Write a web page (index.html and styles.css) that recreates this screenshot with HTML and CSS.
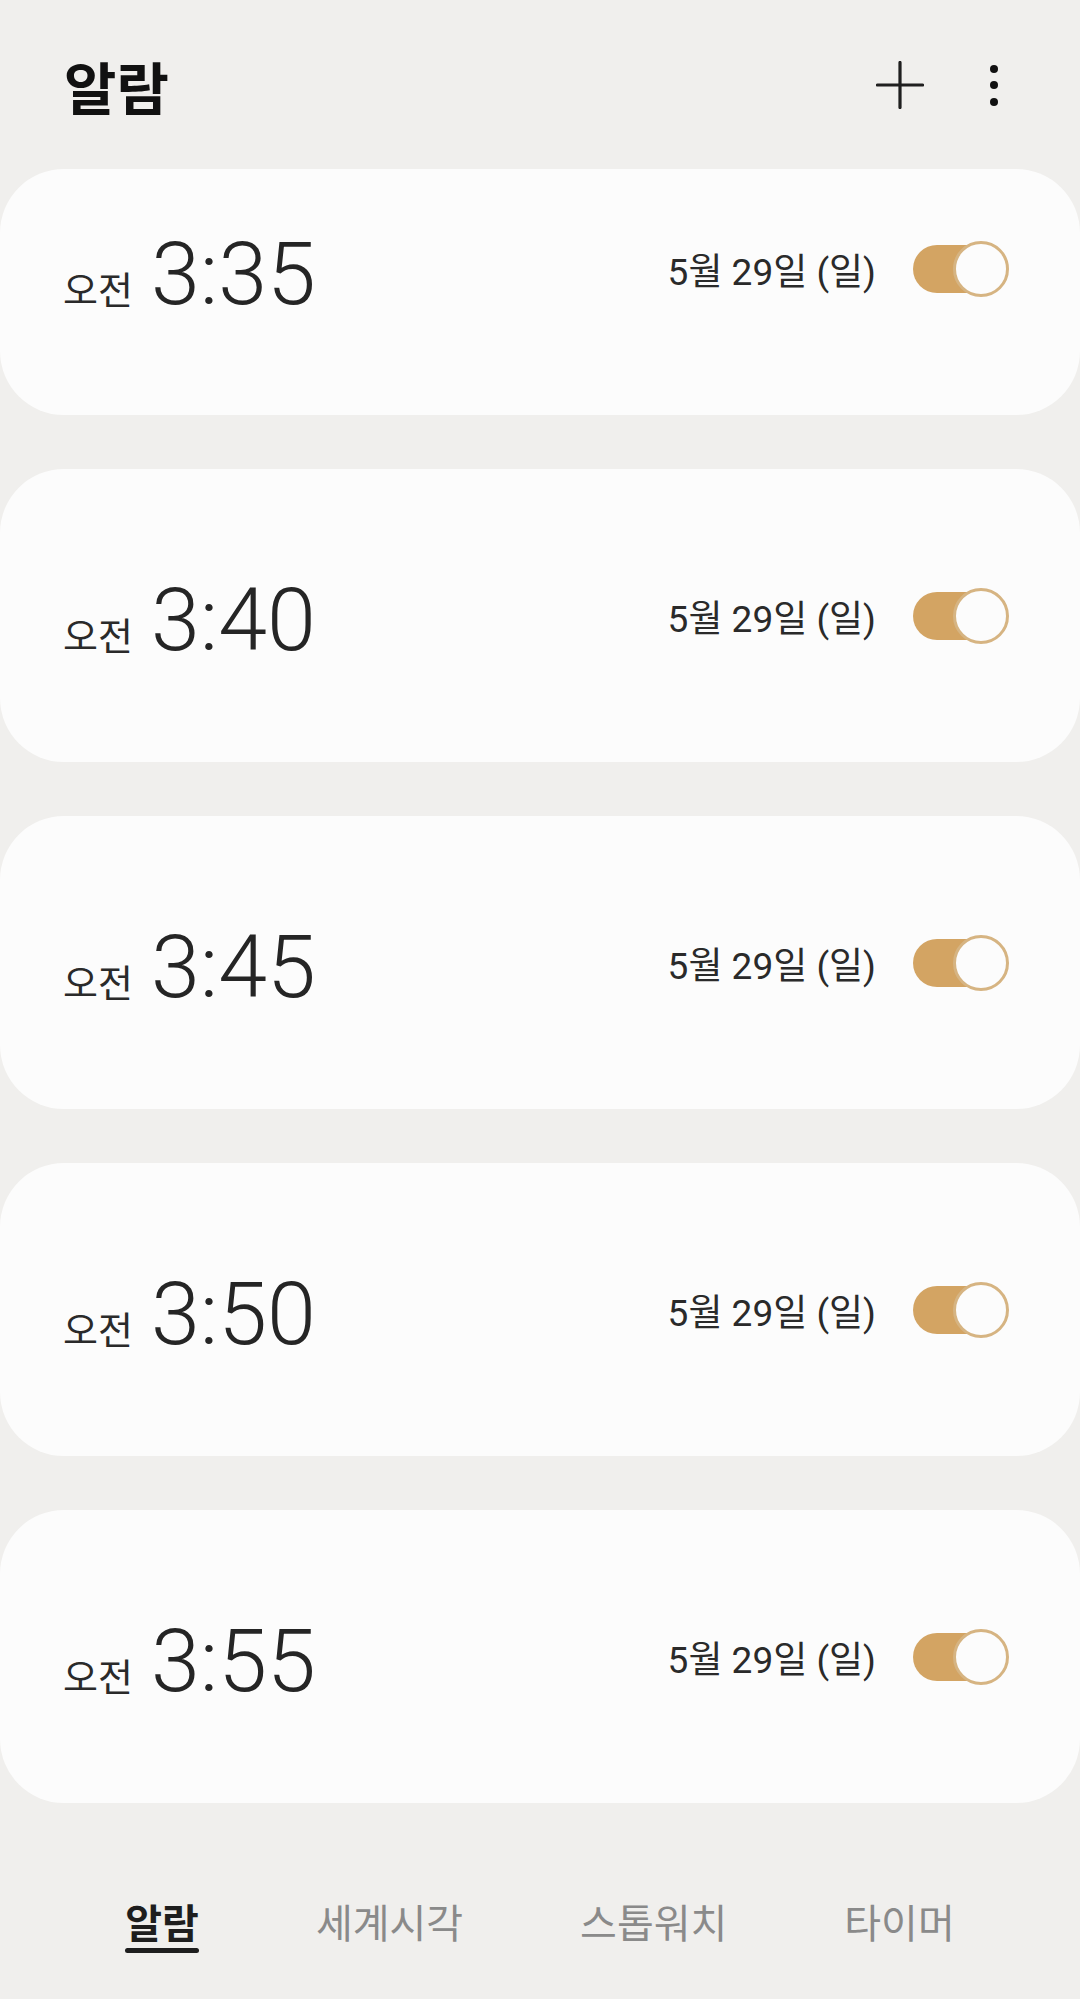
FILE: index.html
```html
<!DOCTYPE html>
<html lang="ko">
<head>
    <meta charset="utf-8">
    <title>알람</title>
    <link rel="stylesheet" href="styles.css">
</head>
<body>
    <div class="header">
        <h1 class="title">알람</h1>
        <div class="header-icons">
            <svg class="icon-plus" width="48" height="48" viewBox="0 0 48 48">
                <path d="M24 1.5 V46.5 M1.5 24 H46.5" stroke="#1f1f1f" stroke-width="3.2" stroke-linecap="round" fill="none"/>
            </svg>
            <svg class="icon-more" width="24" height="48" viewBox="0 0 24 48">
                <circle cx="12" cy="8" r="4" fill="#111"/>
                <circle cx="12" cy="24" r="4" fill="#111"/>
                <circle cx="12" cy="41" r="4" fill="#111"/>
            </svg>
        </div>
    </div>

    <div class="alarm-list">
        <div class="alarm first">
            <div class="alarm-time">
                <span class="ampm">오전</span>
                <span class="clock">3:35</span>
            </div>
            <div class="alarm-right">
                <span class="date">5월 29일 (일)</span>
                <div class="switch"><span class="thumb"></span></div>
            </div>
        </div>

        <div class="alarm">
            <div class="alarm-time">
                <span class="ampm">오전</span>
                <span class="clock">3:40</span>
            </div>
            <div class="alarm-right">
                <span class="date">5월 29일 (일)</span>
                <div class="switch"><span class="thumb"></span></div>
            </div>
        </div>

        <div class="alarm">
            <div class="alarm-time">
                <span class="ampm">오전</span>
                <span class="clock">3:45</span>
            </div>
            <div class="alarm-right">
                <span class="date">5월 29일 (일)</span>
                <div class="switch"><span class="thumb"></span></div>
            </div>
        </div>

        <div class="alarm">
            <div class="alarm-time">
                <span class="ampm">오전</span>
                <span class="clock">3:50</span>
            </div>
            <div class="alarm-right">
                <span class="date">5월 29일 (일)</span>
                <div class="switch"><span class="thumb"></span></div>
            </div>
        </div>

        <div class="alarm">
            <div class="alarm-time">
                <span class="ampm">오전</span>
                <span class="clock">3:55</span>
            </div>
            <div class="alarm-right">
                <span class="date">5월 29일 (일)</span>
                <div class="switch"><span class="thumb"></span></div>
            </div>
        </div>
    </div>

    <div class="tabs">
        <div class="tab active">알람</div>
        <div class="tab">세계시각</div>
        <div class="tab">스톱워치</div>
        <div class="tab">타이머</div>
    </div>
</body>
</html>
```

FILE: styles.css
```css
body {
    margin: 0;
    background-color: #f0efed;
    font-family: Roboto, "Noto Sans CJK KR", sans-serif;
    color: #252525;
}

.header {
    display: flex;
    align-items: center;
    justify-content: space-between;
    height: 169px;
    padding: 0 74px 0 64px;
}

.title {
    margin: 0;
    font-family: "Noto Sans CJK KR", sans-serif;
    font-size: 57px;
    font-weight: 700;
    color: #111;
}

.header-icons {
    display: flex;
    align-items: center;
    gap: 58px;
}

.header-icons svg {
    display: block;
}

.alarm-list {
    display: flex;
    flex-direction: column;
    gap: 54px;
}

.alarm {
    display: flex;
    align-items: center;
    justify-content: space-between;
    height: 293px;
    padding: 0 77px 0 63px;
    background-color: #fcfcfc;
    border-radius: 64px;
}

.alarm.first {
    height: 246px;
    padding-bottom: 46px;
    box-sizing: border-box;
}

.alarm-time {
    display: flex;
    align-items: baseline;
    gap: 18px;
    margin-top: 8px;
}

.ampm {
    font-family: "Noto Sans CJK KR", sans-serif;
    font-size: 38px;
    color: #2a2a2a;
}

.clock {
    font-family: Roboto, sans-serif;
    font-size: 88px;
    font-weight: 300;
    color: #252525;
}

.alarm-right {
    display: flex;
    align-items: center;
    gap: 37px;
}

.date {
    font-size: 37px;
    color: #2a2a2a;
}

.switch {
    position: relative;
    width: 90px;
    height: 48px;
    border-radius: 24px;
    background-color: #d3a463;
}

.switch .thumb {
    position: absolute;
    top: -4px;
    right: -6px;
    width: 50px;
    height: 50px;
    border-radius: 50%;
    background-color: #fcfcfc;
    border: 3px solid #d6b482;
}

.tabs {
    display: flex;
    align-items: flex-start;
    justify-content: center;
    gap: 117px;
    margin-top: 94px;
}

.tab {
    display: flex;
    flex-direction: column;
    font-family: "Noto Sans CJK KR", sans-serif;
    font-size: 40px;
    line-height: 48px;
    color: #8a8a8a;
}

.tab.active {
    font-weight: 700;
    color: #1e1e1e;
}

.tab.active::after {
    content: "";
    display: block;
    height: 5px;
    margin-top: 3px;
    border-radius: 3px;
    background-color: #1e1e1e;
}
```
